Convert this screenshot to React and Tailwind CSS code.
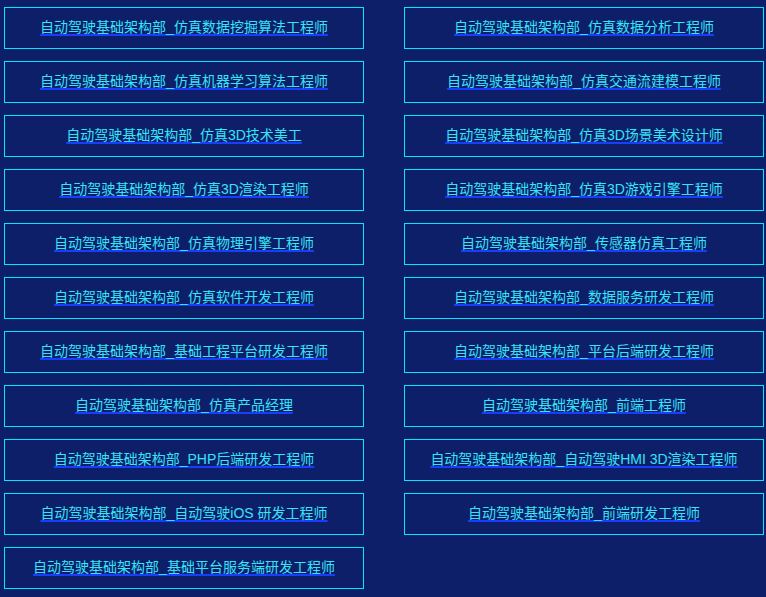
const jobs = [
  "自动驾驶基础架构部_仿真数据挖掘算法工程师",
  "自动驾驶基础架构部_仿真数据分析工程师",
  "自动驾驶基础架构部_仿真机器学习算法工程师",
  "自动驾驶基础架构部_仿真交通流建模工程师",
  "自动驾驶基础架构部_仿真3D技术美工",
  "自动驾驶基础架构部_仿真3D场景美术设计师",
  "自动驾驶基础架构部_仿真3D渲染工程师",
  "自动驾驶基础架构部_仿真3D游戏引擎工程师",
  "自动驾驶基础架构部_仿真物理引擎工程师",
  "自动驾驶基础架构部_传感器仿真工程师",
  "自动驾驶基础架构部_仿真软件开发工程师",
  "自动驾驶基础架构部_数据服务研发工程师",
  "自动驾驶基础架构部_基础工程平台研发工程师",
  "自动驾驶基础架构部_平台后端研发工程师",
  "自动驾驶基础架构部_仿真产品经理",
  "自动驾驶基础架构部_前端工程师",
  "自动驾驶基础架构部_PHP后端研发工程师",
  "自动驾驶基础架构部_自动驾驶HMI 3D渲染工程师",
  "自动驾驶基础架构部_自动驾驶iOS 研发工程师",
  "自动驾驶基础架构部_前端研发工程师",
  "自动驾驶基础架构部_基础平台服务端研发工程师",
];

export default function App() {
  return (
    <div className="w-[766px] h-[597px] overflow-hidden bg-[#0d1f69] pl-[4px] pt-[7px] font-['Liberation_Sans','Noto_Sans_CJK_SC',sans-serif]">
      <div className="grid grid-cols-[360px_360px] gap-x-[40px] gap-y-[12px]">
        {jobs.map((job, i) => (
          <a
            key={i}
            href="#"
            className="h-[42px] border border-[#00e8ff] flex items-center justify-center pb-[3px]"
          >
            <span className="text-[14px] leading-[20px] text-[#36e4f8] underline decoration-[#1a3cff] decoration-[1.5px] underline-offset-[2px]">
              {job}
            </span>
          </a>
        ))}
      </div>
    </div>
  );
}
